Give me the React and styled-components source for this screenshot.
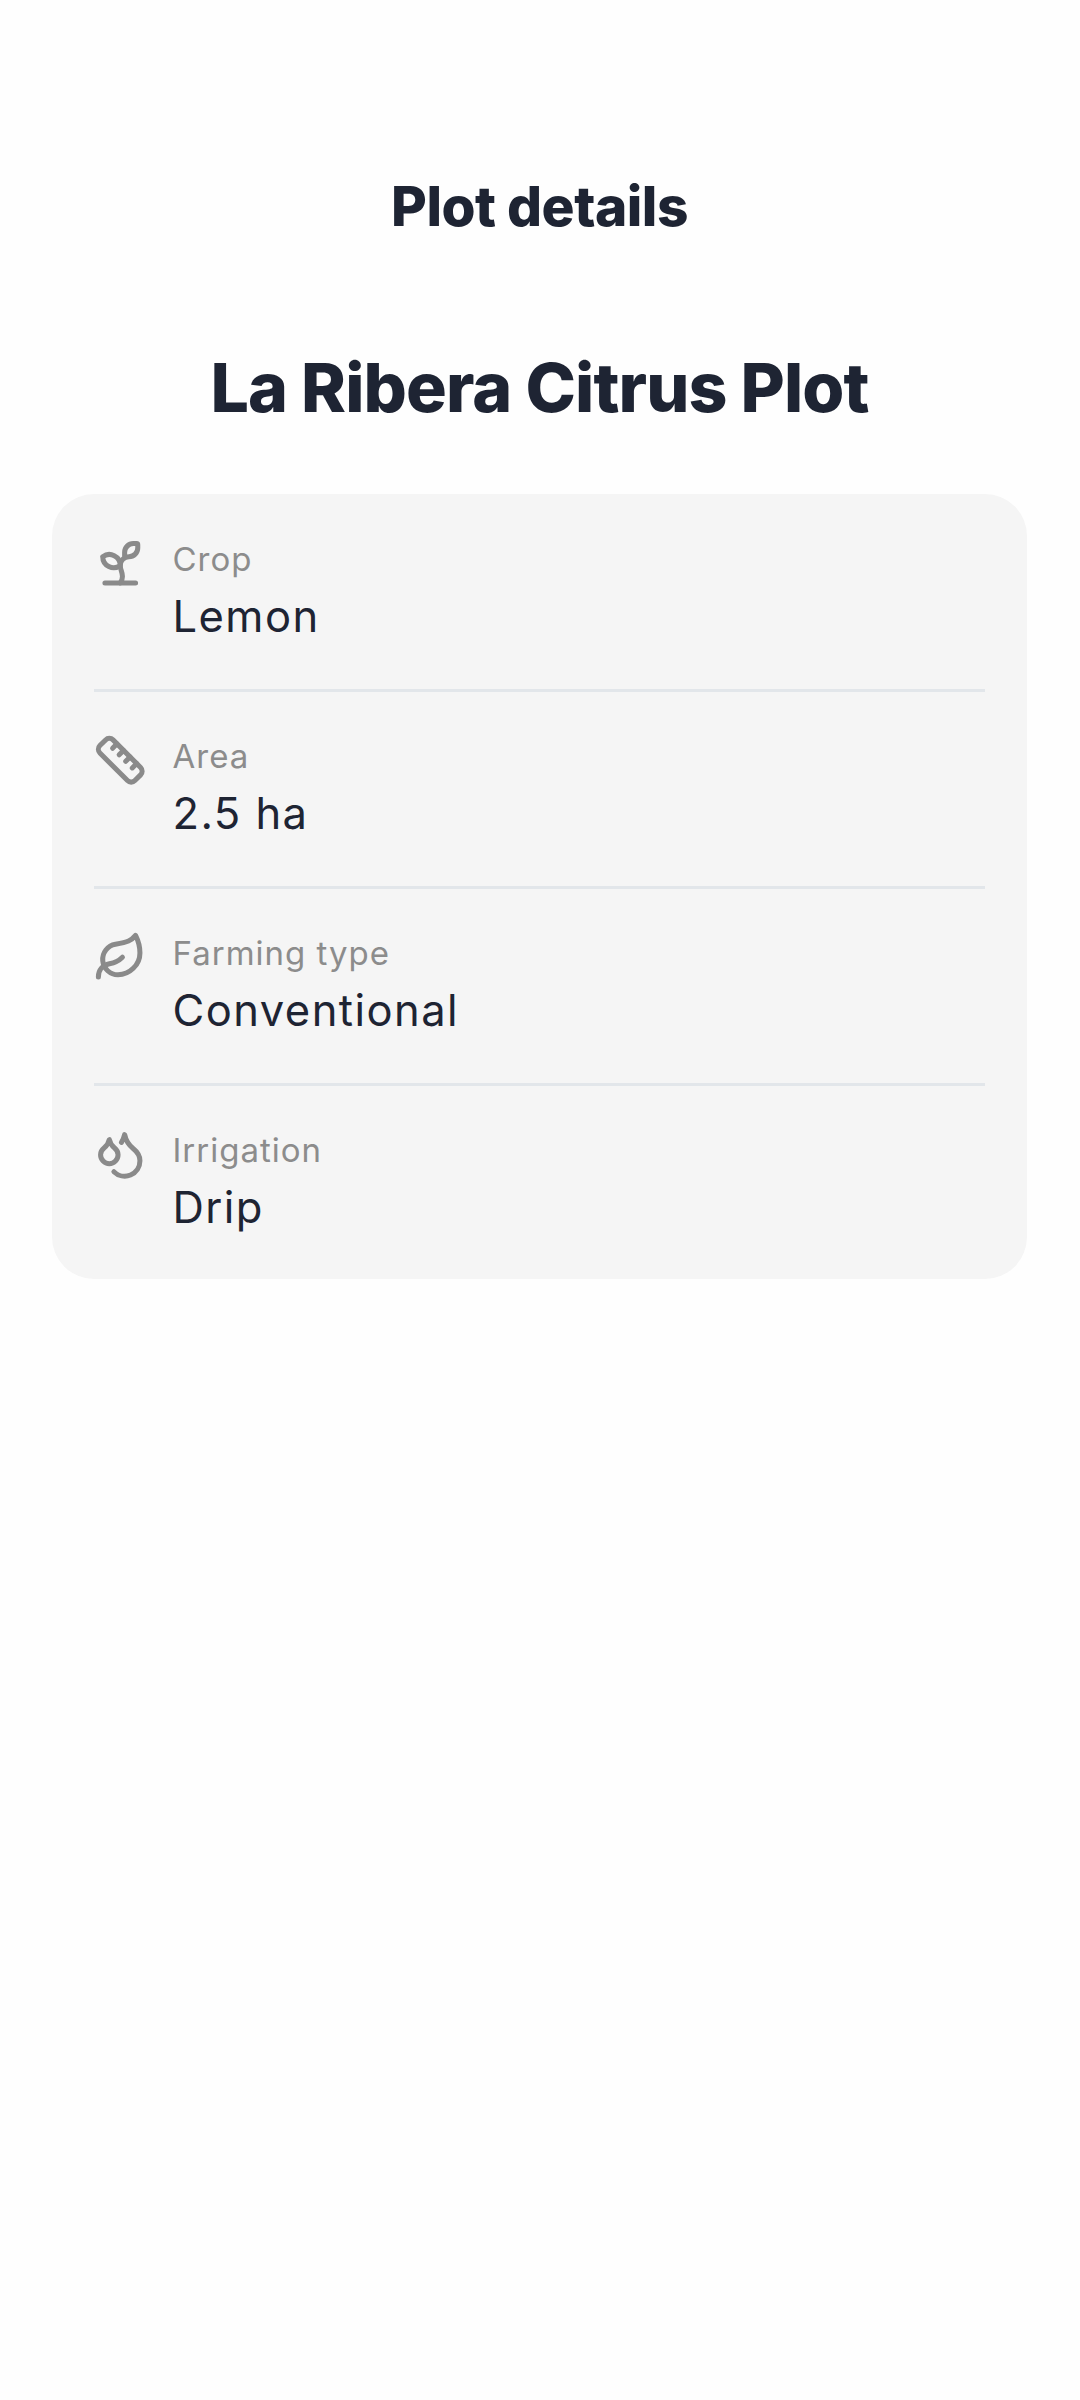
import React from "react";
import styled, { createGlobalStyle } from "styled-components";
import { Sprout, Ruler, Leaf, Droplets } from "lucide-react";

const Global = createGlobalStyle`
  html, body { margin: 0; padding: 0; background: #fefefe; }
  body { font-family: Inter, "Noto Sans", "Liberation Sans", sans-serif; }
`;

const Page = styled.div`
  width: 1080px;
  height: 2400px;
  box-sizing: border-box;
  padding: 176px 53px 0 52px;
  display: flex;
  flex-direction: column;
`;

const ScreenTitle = styled.h1`
  margin: 0;
  height: 60px;
  line-height: 60px;
  font-size: 55px;
  font-weight: 800;
  letter-spacing: -0.5px;
  color: #1e2433;
  text-align: center;
`;

const PlotName = styled.h2`
  margin: 109px 0 0;
  height: 84px;
  line-height: 84px;
  font-size: 68px;
  font-weight: 800;
  letter-spacing: -0.9px;
  color: #1e2433;
  text-align: center;
`;

const Card = styled.section`
  margin-top: 65px;
  height: 784.5px;
  box-sizing: border-box;
  padding: 1px 42px 0;
  background: #f5f5f5;
  border-radius: 42px;
  display: flex;
  flex-direction: column;
`;

const Row = styled.div`
  height: 197px;
  flex: none;
  box-sizing: border-box;
  padding-top: 42px;
  display: flex;
  gap: 26px;
  border-bottom: ${(p) => (p.$last ? "none" : "3px solid #e2e6ea")};
`;

const IconSlot = styled.div`
  width: 52.5px;
  height: 52.5px;
  flex: none;
  color: #8a8a8a;
`;

const Text = styled.div`
  display: flex;
  flex-direction: column;
  min-width: 0;
`;

const Label = styled.div`
  font-size: 33px;
  line-height: 44px;
  font-weight: 400;
  color: #8c8c8c;
  letter-spacing: 1px;
`;

const Value = styled.div`
  margin-top: 7px;
  font-size: 43.5px;
  line-height: 56px;
  font-weight: 400;
  color: #1e2433;
  letter-spacing: 1.45px;
`;

const rows = [
  { Icon: Sprout, label: "Crop", value: "Lemon" },
  { Icon: Ruler, label: "Area", value: "2.5 ha" },
  { Icon: Leaf, label: "Farming type", value: "Conventional" },
  { Icon: Droplets, label: "Irrigation", value: "Drip" },
];

export default function App() {
  return (
    <Page>
      <Global />
      <ScreenTitle>Plot details</ScreenTitle>
      <PlotName>La Ribera Citrus Plot</PlotName>
      <Card>
        {rows.map(({ Icon, label, value }, i) => (
          <Row key={label} $last={i === rows.length - 1}>
            <IconSlot>
              <Icon size={52.5} strokeWidth={2.3} />
            </IconSlot>
            <Text>
              <Label>{label}</Label>
              <Value>{value}</Value>
            </Text>
          </Row>
        ))}
      </Card>
    </Page>
  );
}
